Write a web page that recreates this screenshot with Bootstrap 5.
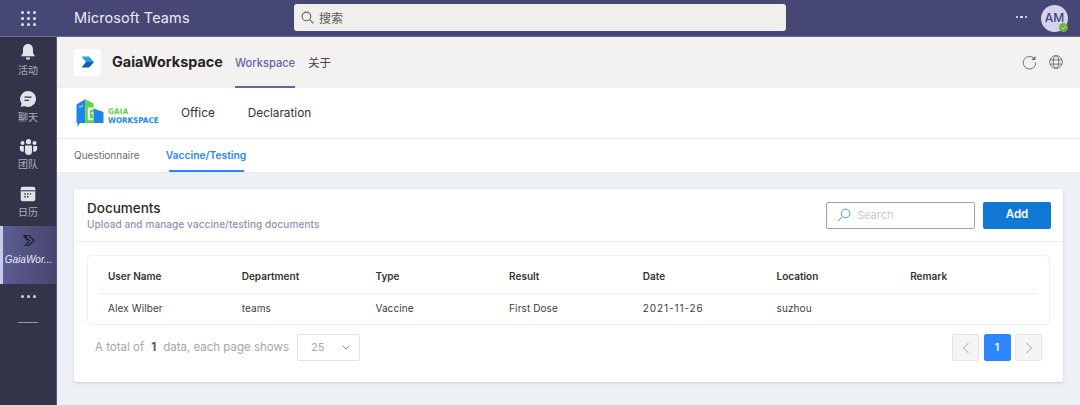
<!DOCTYPE html>
<html lang="en"><head><meta charset="utf-8"><title>GaiaWorkspace</title>
<link href="https://cdn.jsdelivr.net/npm/bootstrap@5.3.0/dist/css/bootstrap.min.css" rel="stylesheet">
<style>
html,body{height:405px;overflow:hidden}
body{font-family:Inter,"Noto Sans CJK SC",sans-serif;background:#edf1f6;color:#252423}
.cjk{font-family:"Noto Sans CJK SC",sans-serif}
.top-bar{height:37px;background:#464775;border-bottom:1px solid #6a6b95;color:#fff}
.waffle{width:57px}
.waffle-grid{display:grid;grid-template-columns:repeat(3,3px);gap:3px}
.waffle-grid i{width:3px;height:3px;background:#e4e4ef;border-radius:50%}
.brand-name{width:237px;padding-left:17px;font-size:14.5px;letter-spacing:.1px;color:#ecebf3}
.search-box{width:492px;height:27px;background:#f0efeb;border-radius:3px;padding-left:7px;font-size:12px;color:#57575a;gap:5px;margin-top:-1px}
.top-more{margin-right:14px;gap:2px;margin-top:-2px}
.top-more i{width:2.5px;height:2.5px;background:#f0f0f6;border-radius:50%}
.avatar{width:27px;height:27px;border-radius:50%;background:#d4d2ec;color:#42436f;font-size:12px;margin-right:12px;font-weight:500}
.presence{right:0;bottom:0;position:absolute;display:block}
.rail{width:57px;background:#33344a;border-right:1px solid #55567a;height:368px}
.rail-item{height:47.3px;color:#aeaebd;font-size:10px;line-height:13px;padding-top:6px}
.rail-item svg{display:block;margin-bottom:1px}
.rail-active{height:58px;background:linear-gradient(90deg,#5c5d92,#45466f);border-left:3px solid #c9c9ea;padding:8px 2px 0 0;color:#ebebf4;font-style:italic;font-size:10px;font-family:"Liberation Sans",sans-serif}
.rail-active svg{margin-bottom:5px}
.rail-dots{gap:3px;margin-top:11px}
.rail-dots i{width:3px;height:3px;border-radius:50%;background:#d6d6e2}
.rail-line{width:20px;height:1px;background:#9c9cae;margin-top:24px}
.app-head{height:51px;background:#f3f2f1;border-bottom:1px solid #ebebeb;padding-left:17px}
.app-tile{width:27px;height:27px;background:#fff;border-radius:3px}
.app-title{font-size:14.4px;font-weight:700;margin-left:11px;color:#252423;width:123px}
.app-tab{height:51px;line-height:51px;font-size:11.5px;position:relative;color:#484644}
.app-tab.on{color:#6264a7;font-weight:500;font-size:11.1px;line-height:53px;border-bottom:2px solid #6264a7;margin-right:13px}
.head-tools{gap:12px;margin-right:17px}
.menu-row{height:51px;background:#fff;border-bottom:1px solid #e8e9eb;padding-left:19px}
.logo-words{line-height:9px;font-family:"DejaVu Sans",sans-serif;font-weight:700;font-size:7.8px;margin-left:3px;width:73px;padding-top:5px}
.logo-g{color:#5fd53f;letter-spacing:.2px;transform:scaleX(.92);transform-origin:left}
.logo-w{color:#1e88e8;transform:scaleX(.92);transform-origin:left;white-space:nowrap}
.menu-link{font-size:11.8px;color:#333;padding-top:2px}
.sub-tabs{height:34px;background:#fff;border-bottom:1px solid #e7ebf0;padding-left:17px;font-size:10px;color:#6d6d6d}
.sub-on{color:#2d86ff;font-weight:600;height:33px;margin-left:26px;font-size:10.3px;position:relative}
.sub-on::after{content:"";position:absolute;left:3px;right:2px;bottom:0;height:2px;background:#2d86ff}
.doc-card{margin:16px 17px 0;height:193px;background:#fff;border-radius:2px;box-shadow:0 1px 3px rgba(60,70,90,.22)}
.doc-head{height:53px;border-bottom:1px solid #ececec;padding:0 12px 0 13px}
.doc-title{font-size:13.5px;font-weight:500;line-height:17px;color:#2b2b2b;margin-top:2px}
.doc-sub{font-size:10px;font-weight:500;color:#8c92b4;line-height:15px;letter-spacing:.1px}
.search-field{width:149px;height:27px;border:1px solid #a3a3a3;border-radius:2px;padding-left:10px;font-size:11px;color:#c9c9c9;gap:6px;margin-right:8px}
.add-btn{width:68px;height:27px;background:#0f78d4;border-radius:2px;color:#fff;font-size:11.5px;font-weight:600;padding:0;border:0}
.add-btn:hover{background:#0f78d4;color:#fff}
.data-box{margin:13px 13px 0;height:70px;border:1px solid #efefef;border-radius:4px;padding:0 12px}
.data-table{table-layout:fixed;width:936px;margin:0;font-size:10px}
.data-table th{height:37px;padding:5px 0 0 8px;font-weight:600;color:#333;border-bottom:1px solid #eee;vertical-align:middle;background:transparent}
.data-table td{height:31px;padding:0 0 0 8px;color:#3b3b3b;font-weight:400;border:0;vertical-align:middle;background:transparent;letter-spacing:.1px}
.data-table td.date-cell{letter-spacing:.9px}
.pager-row{margin:9px 21px 0 21px}
.total-txt{font-size:11.5px;color:#a6a6a6}
.total-num{color:#555;font-weight:700;margin:0 7px}
.size-pick{width:63px;height:27px;border:1px solid #e3e3e3;border-radius:2px;margin-left:8px;padding:0 9px 0 13px;font-size:11px;color:#a6a6a6}
.page-list{gap:4.5px}
.page-btn{width:27px;height:27px;border:1px solid #e6e6e6;border-radius:2px;background:#f5f5f5}
.page-now{background:#2d86ff;border-color:#2d86ff;color:#fff;font-size:10.5px;font-weight:600}
</style></head>
<body>
<header class="top-bar d-flex align-items-center">
  <div class="waffle d-flex justify-content-center"><div class="waffle-grid"><i></i><i></i><i></i><i></i><i></i><i></i><i></i><i></i><i></i></div></div>
  <div class="brand-name">Microsoft Teams</div>
  <div class="search-box d-flex align-items-center">
    <svg width="13" height="13" viewBox="0 0 13 13" fill="none" stroke="#5f5f5f" stroke-width="1.1"><circle cx="5.4" cy="5.4" r="4.3"/><path d="M8.6 8.6 12.4 12.4"/></svg>
    <span class="cjk">搜索</span>
  </div>
  <div class="ms-auto d-flex align-items-center">
    <div class="top-more d-flex"><i></i><i></i><i></i></div>
    <div class="avatar position-relative d-flex align-items-center justify-content-center">AM
      <svg class="presence" width="9" height="9" viewBox="0 0 9 9"><circle cx="4.5" cy="4.500" r="4.500" fill="#6fb33f"/><path d="M2.700 4.700l1.300 1.200 2.300-2.600" fill="none" stroke="#eef6e4" stroke-width=".8"/></svg>
    </div>
  </div>
</header>
<div class="d-flex">
  <nav class="rail flex-shrink-0 d-flex flex-column align-items-center cjk">
    <div class="rail-item d-flex flex-column align-items-center">
      <svg width="16" height="19" viewBox="0 0 16 19" fill="#e2e2ea"><path d="M8 1c3.2 0 5 2.400 5 5.400v3.600l2 3.300H1l2-3.300V6.400C3 3.400 4.800 1 8 1z"/><path d="M5.800 14.500h4.400a2.200 2.200 0 0 1-4.400 0z"/></svg>活动
    </div>
    <div class="rail-item d-flex flex-column align-items-center">
      <svg width="18" height="19" viewBox="0 0 18 19"><path fill="#e2e2ea" d="M9 1a8 8 0 1 1-3.700 15.100L1.600 17l1-3.400A8 8 0 0 1 9 1z"/><path stroke="#33344a" stroke-width="1.300" d="M5.500 7.200h7M5.500 10.300h4.500"/></svg>聊天
    </div>
    <div class="rail-item d-flex flex-column align-items-center">
      <svg width="19" height="18" viewBox="0 0 19 17" fill="#e2e2ea"><circle cx="9.500" cy="3.200" r="2.600"/><circle cx="3.500" cy="4.500" r="2"/><circle cx="15.500" cy="4.500" r="2"/><path d="M6 7h7v6a3.500 3.500 0 0 1-7 0z"/><path d="M.8 7.500h4v5.500a2.200 2.200 0 0 1-1 .3C1.800 13.300.8 11.800.8 10zM14.200 7.500h4V10c0 1.800-1 3.300-3 3.300a2.200 2.200 0 0 1-1-.3z"/></svg>团队
    </div>
    <div class="rail-item d-flex flex-column align-items-center">
      <svg width="16" height="19" viewBox="0 -1 16 19"><path fill="#e2e2ea" d="M2.500.8h11A2 2 0 0 1 15.300 2.800v10.400a2 2 0 0 1-2 2h-10.600a2 2 0 0 1-2-2V2.800a2 2 0 0 1 1.800-2z"/><path stroke="#33344a" d="M.8 4.800h14.500"/><path stroke="#33344a" stroke-width="1.400" stroke-dasharray="1.500 1.300" d="M4.300 8h6.800M4.300 10.800h4.200"/></svg>日历
    </div>
    <div class="rail-active w-100 d-flex flex-column align-items-center">
      <svg width="12" height="13" viewBox="0 0 12 13" fill="none" stroke="#1c1c2c" stroke-width="1.200"><path d="M1 1.500h5l5 5-5 5H2.500L6.500 6.500z"/><path d="M1 1.500 4 6.500"/></svg>GaiaWor...
    </div>
    <div class="rail-dots d-flex"><i></i><i></i><i></i></div>
    <div class="rail-line"></div>
  </nav>
  <main class="flex-grow-1" style="min-width:0">
    <div class="app-head d-flex align-items-center">
      <div class="app-tile d-flex align-items-center justify-content-center">
        <svg width="14" height="14" viewBox="0 0 14 14"><path fill="#23a0e6" d="M.5 1.500h7.500l5 5.500H5z"/><path fill="#0f5fb0" d="M5 7h8l-5 5.500H.5z"/></svg>
      </div>
      <div class="app-title">GaiaWorkspace</div>
      <div class="app-tab on">Workspace</div>
      <div class="app-tab cjk">关于</div>
      <div class="ms-auto head-tools d-flex align-items-center">
        <svg width="15" height="15" viewBox="0 0 16 16" fill="none" stroke="#6b6a69" stroke-width="1"><path d="M12.800 3.600A6.700 6.700 0 1 0 14.700 8"/><path fill="#6b6a69" stroke="none" d="M14.300 1v4.300H10z"/></svg>
        <svg width="14" height="14" viewBox="0 0 15 15" fill="none" stroke="#6b6a69" stroke-width="1"><circle cx="7.500" cy="7.500" r="6.800"/><ellipse cx="7.500" cy="7.500" rx="3" ry="6.800"/><path d="M1.200 5.200h12.600M1.200 9.800h12.600"/></svg>
      </div>
    </div>
    <div class="menu-row d-flex align-items-center">
      <svg width="29" height="30" viewBox="0 0 28 30"><path fill="#1c86e8" d="M0 6.500 9 1v24H3.500L1 29v-4H0z"/><path fill="#5ad53c" d="M9 1.500l8 4v19.500H9z"/><path fill="#fff" d="M11.300 9.500h5.200v2.300h-3v8.500h3v-4h-1.500v-2h3.500v8h-7.200z"/><path fill="#1c86e8" d="M17 10.500l10 3.500V25H17z"/><path fill="#fff" d="M3 8h1.300v1.600H3zM5.300 7h1.300v1.600H5.300z"/></svg>
      <div class="logo-words"><div class="logo-g">GAIA</div><div class="logo-w">WORKSPACE</div></div>
      <a class="menu-link text-decoration-none" href="#">Office</a>
      <a class="menu-link text-decoration-none" style="margin-left:33px" href="#">Declaration</a>
    </div>
    <div class="sub-tabs d-flex align-items-center">
      <span>Questionnaire</span>
      <span class="sub-on d-flex align-items-center">Vaccine/Testing</span>
    </div>
    <section class="doc-card">
      <div class="doc-head d-flex align-items-center justify-content-between">
        <div><div class="doc-title">Documents</div><div class="doc-sub">Upload and manage vaccine/testing documents</div></div>
        <div class="d-flex align-items-center">
          <div class="search-field d-flex align-items-center">
            <svg width="14" height="14" viewBox="0 0 14 14" fill="none" stroke="#4f9be8" stroke-width="1"><circle cx="8.600" cy="5.400" r="4.300"/><path d="M5.500 8.500 1 13"/></svg>Search
          </div>
          <button class="btn add-btn" type="button">Add</button>
        </div>
      </div>
      <div class="data-box">
        <table class="table data-table">
          <thead><tr><th>User Name</th><th>Department</th><th>Type</th><th>Result</th><th>Date</th><th>Location</th><th>Remark</th></tr></thead>
          <tbody><tr><td>Alex Wilber</td><td>teams</td><td>Vaccine</td><td>First Dose</td><td class="date-cell">2021-11-26</td><td>suzhou</td><td></td></tr></tbody>
        </table>
      </div>
      <div class="pager-row d-flex align-items-center justify-content-between">
        <div class="d-flex align-items-center total-txt">A total of <span class="total-num">1</span> data, each page shows
          <div class="size-pick d-flex align-items-center justify-content-between">25
            <svg width="8" height="5" viewBox="0 0 8 5" fill="none" stroke="#888"><path d="M1 1l3 3 3-3"/></svg>
          </div>
        </div>
        <div class="d-flex page-list">
          <div class="page-btn d-flex align-items-center justify-content-center"><svg width="8" height="12" viewBox="0 0 8 12" fill="none" stroke="#c6c6c6" stroke-width="1.300"><path d="M6.500 1 1.500 6l5 5"/></svg></div>
          <div class="page-btn page-now d-flex align-items-center justify-content-center">1</div>
          <div class="page-btn d-flex align-items-center justify-content-center"><svg width="8" height="12" viewBox="0 0 8 12" fill="none" stroke="#c6c6c6" stroke-width="1.300"><path d="M1.500 1l5 5-5 5"/></svg></div>
        </div>
      </div>
    </section>
  </main>
</div>
</body></html>
